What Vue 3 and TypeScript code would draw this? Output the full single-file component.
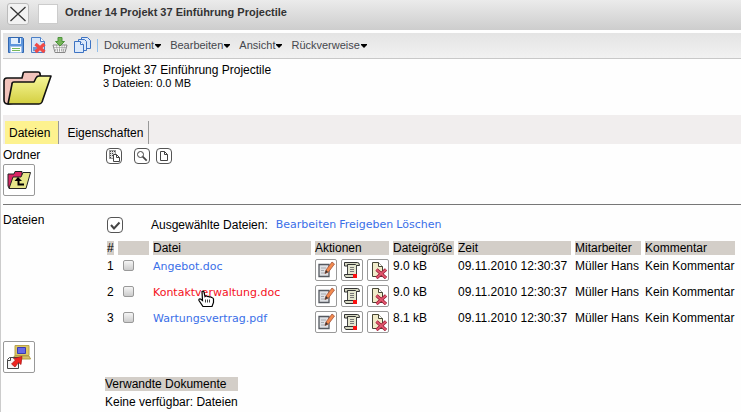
<script setup lang="ts">
import { ref } from 'vue'

interface FileRow {
  id: number
  name: string
  size: string
  time: string
  user: string
  comment: string
  checked: boolean
  active?: boolean
}

const menus: string[] = ['Dokument', 'Bearbeiten', 'Ansicht', 'Rückverweise']
const files = ref<FileRow[]>([
  { id: 1, name: 'Angebot.doc', size: '9.0 kB', time: '09.11.2010 12:30:37', user: 'Müller Hans', comment: 'Kein Kommentar', checked: false },
  { id: 2, name: 'Kontaktverwaltung.doc', size: '9.0 kB', time: '09.11.2010 12:30:37', user: 'Müller Hans', comment: 'Kein Kommentar', checked: false, active: true },
  { id: 3, name: 'Wartungsvertrag.pdf', size: '8.1 kB', time: '09.11.2010 12:30:37', user: 'Müller Hans', comment: 'Kein Kommentar', checked: false },
])

function toggleAll(): void {
  const next = !files.value.every((f) => f.checked)
  files.value.forEach((f) => (f.checked = next))
}
</script>

<template>
  <div class="window">
    <header class="titlebar">
      <button class="close" aria-label="Schließen">
        <svg width="20" height="20" viewBox="0 0 20 20"><path d="M2.500 3L17.500 17M17.500 3L2.500 17" stroke="#333" stroke-width="1.300" /></svg>
      </button>
      <button class="blank" aria-label="Fenster"></button>
      <h1>Ordner 14 Projekt 37 Einführung Projectile</h1>
    </header>

    <main class="content">
      <nav class="toolbar">
        <button class="tool" aria-label="Speichern">
          <svg width="16" height="16" viewBox="0 0 16 16">
            <path d="M.5 .5h14l1 1v14H.5z" fill="#5f96dc" stroke="#3267b0" />
            <path d="M3 1h10v6H3z" fill="#e3effc" /><path d="M10 1h2v5h-2z" fill="#3f74bd" />
            <path d="M2.500 9.500h11v6h-11z" fill="#fff" stroke="#a4c2e8" />
            <path d="M4 11.500h8M4 13.500h8" stroke="#78b85c" />
          </svg>
        </button>
        <button class="tool" aria-label="Löschen">
          <svg width="16" height="16" viewBox="0 0 16 16">
            <path d="M1.500 .5h9l4 4v11h-13z" fill="#d5e5f8" stroke="#4c7fc6" />
            <path d="M10.500 .5v4h4" fill="#fff" stroke="#4c7fc6" /><path d="M3 12h5" stroke="#6a99d8" stroke-width="4" />
            <path d="M5.500 7l9 8M14.500 7l-9 8" stroke="#f04a47" stroke-width="3.400" />
          </svg>
        </button>
        <button class="tool" aria-label="Ablegen">
          <svg width="16" height="16" viewBox="0 0 16 16">
            <path d="M1 8h14l-2 7.500H3z" fill="#f6f6f6" stroke="#888" />
            <path d="M2.500 10.500h11M3 13h10M4.500 8.500l1 6.500M7.500 8.500V15M10 8.500V15M12.500 8.500L11.500 15" stroke="#888" stroke-dasharray="1 1" />
            <path d="M6 .5h4v4h2.500L8 9 3.500 4.500H6z" fill="#76b458" stroke="#4d953c" />
          </svg>
        </button>
        <button class="tool" aria-label="Kopieren">
          <svg width="17" height="16" viewBox="0 0 17 16" fill="#dce9fa" stroke="#3d73c3">
            <path d="M7.500 .5h6l3 3v8h-9z" /><path d="M4.500 2.500h6l2 2v9h-8z" /><path d="M.5 4.500h6l3 3v8h-9z" /><path d="M6.500 4.500v3h3" fill="#fff" />
          </svg>
        </button>
        <span class="divider"></span>
        <button v-for="m in menus" :key="m" class="menu">{{ m }}<svg width="6" height="4" viewBox="0 0 6 4"><path d="M0 0h6v1L3 4 0 1z" fill="#000" /></svg></button>
      </nav>

      <section class="summary">
        <svg class="folder" width="49" height="36" viewBox="0 0 49 36" stroke="#111" stroke-width="1.600" stroke-linejoin="round">
          <defs><linearGradient id="gold" x1="0" y1="0" x2="0" y2="1"><stop offset="0" stop-color="#f7f79a" /><stop offset="1" stop-color="#d3cf40" /></linearGradient></defs>
          <path d="M5 34Q1 34 1 30V11Q1 8 4 8h15l1-4q0-2 2-2h13q2 0 2 2l1 4v5L32 30Z" fill="#f2c3bb" />
          <path d="M5 34l4-20q0-2 2-2h20l2-4q1-2 3-2h12l-9 26q-1 2-3 2Z" fill="url(#gold)" />
        </svg>
        <div>
          <h2>Projekt 37 Einführung Projectile</h2>
          <p>3 Dateien: 0.0 MB</p>
        </div>
      </section>

      <nav class="tabs">
        <a href="#dateien" class="tab current">Dateien</a>
        <a href="#eigenschaften" class="tab">Eigenschaften</a>
      </nav>

      <section class="row folders">
        <div class="side">
          <h3>Ordner</h3>
          <button class="big" aria-label="Übergeordneter Ordner">
            <svg width="24" height="20" viewBox="0 0 24 20" stroke="#222" stroke-linejoin="round">
              <path d="M1 4h6l1-2.500h7V5h5L16 18H2L1 16z" fill="#d82664" />
              <path d="M2 18.500L6 7h8l2-4.500h7.500L19 18.500z" fill="#e7e58a" />
              <path d="M11 7l4 4h-2.500v2.500H17v2h-6.500V11H7.500z" fill="#000" stroke="none" />
            </svg>
          </button>
        </div>
        <div class="minis">
          <button class="mini" aria-label="Einfügen">
            <svg width="16" height="16" viewBox="0 0 16 16" fill="none" stroke="#444">
              <path d="M3.500 2.500h6v8h-6z" fill="#ddd" stroke-dasharray="1 1" /><path d="M4 3.500h5M4 5.500h4M4 7.500h3M4.500 3v7M6.500 3v4" stroke-dasharray="1 1" />
              <path d="M7.500 6.500h3l3 3v4h-6z" fill="#fff" /><path d="M10.500 6.500v3h3" />
            </svg>
          </button>
          <button class="mini spaced" aria-label="Suchen">
            <svg width="16" height="16" viewBox="0 0 16 16" fill="none" stroke="#444"><circle cx="6.500" cy="6.500" r="3" /><path d="M8.700 8.700l4 4" stroke-width="1.800" /></svg>
          </button>
          <button class="mini" aria-label="Neu">
            <svg width="16" height="16" viewBox="0 0 16 16" fill="none" stroke="#444"><path d="M4.500 3.500h4l3 3v6h-7z" /><path d="M8.500 3.500v3h3" /></svg>
          </button>
        </div>
      </section>

      <section class="row files">
        <div class="side">
          <h3>Dateien</h3>
          <button class="big upload" aria-label="Hochladen">
            <svg width="24" height="24" viewBox="0 0 24 24">
              <path d="M8 .5h14v10H8z" fill="#dec863" stroke="#b8a24c" /><path d="M10.500 2.500h8v6h-8z" fill="#6668e6" stroke="#3a3ab0" />
              <path d="M7 11h15l1.500 3H8z" fill="#d8c264" stroke="#b09b45" />
              <path d="M2.500 12.500h9v11H.5v-9z" fill="#f4f4f4" stroke="#444" /><path d="M.5 15.500h3v-3" fill="#fff" stroke="#444" />
              <path d="M15 11.500l-1 8-2.500-2L8 22l-3.500-3 4-4-2-1.500z" fill="#ed2420" stroke="#a51213" stroke-width=".7" />
            </svg>
          </button>
        </div>
        <div class="listing">
          <div class="selection">
            <button class="mini" aria-label="Alle auswählen" @click="toggleAll">
              <svg width="16" height="16" viewBox="0 0 16 16"><path d="M4 8l3 3.500L12.500 5.500" fill="none" stroke="#444" stroke-width="2" /></svg>
            </button>
            <span class="caption">Ausgewählte Dateien:</span>
            <a href="#bearbeiten">Bearbeiten</a><a href="#freigeben">Freigeben</a><a href="#loeschen">Löschen</a>
          </div>
          <table>
            <colgroup>
              <col class="c-num" /><col class="c-check" /><col class="c-name" /><col class="c-act" /><col class="c-size" /><col class="c-time" /><col class="c-user" /><col class="c-note" />
            </colgroup>
            <thead>
              <tr><th>#</th><th></th><th>Datei</th><th>Aktionen</th><th>Dateigröße</th><th>Zeit</th><th>Mitarbeiter</th><th>Kommentar</th></tr>
            </thead>
            <tbody>
              <tr v-for="f in files" :key="f.id">
                <td>{{ f.id }}</td>
                <td><input v-model="f.checked" type="checkbox" :aria-label="f.name" /></td>
                <td class="name">
                  <a href="#datei" :class="{ active: f.active }">{{ f.name }}</a>
                  <svg v-if="f.active" class="pointer" width="17" height="17" viewBox="0 0 17 17">
                    <path d="M4 1.500q1.500-1 2 .5l1 4.500q1-1 2.500 0 1-.5 2 .5 1.500-.5 2 .5 1.500 0 2 1.500v3.500l-1.500 4h-9L1 10.500q-.5-2 1.500-1.500l2 1.500z" fill="#fff" stroke="#000" stroke-width="1.200" />
                    <path d="M7.500 9.500v3M9.500 9.500v3M11.500 9.500v3" stroke="#444" />
                  </svg>
                </td>
                <td>
                  <div class="actions">
                    <button class="action" aria-label="Bearbeiten">
                      <svg width="18" height="18" viewBox="0 0 18 18">
                        <path d="M2 3.500h10v12H2z" fill="#dfe1e5" stroke="#555960" stroke-width="1.300" /><path d="M4 7h5M4 9.500h3M4 12h4" stroke="#a5a8ae" />
                        <path d="M8 12.500l1-3.500 6-8 2.500 2L11.500 11z" fill="#f28a4e" stroke="#a1503a" stroke-width=".8" /><path d="M8 12.500l3-1.500-2-2z" fill="#333" />
                      </svg>
                    </button>
                    <button class="action" aria-label="Freigeben">
                      <svg width="18" height="18" viewBox="0 0 18 18">
                        <path d="M4.500 2.500h9v12h-9z" fill="#e4e6cf" stroke="#444" /><path d="M1.500 1.500h13q2 0 2 3h-3l-1-1h-8v1.500h-3z" fill="#d5d7c1" stroke="#333" />
                        <path d="M1.500 13.500h11l1 3H3q-2-1-1.500-3z" fill="#d5d7c1" stroke="#333" /><path d="M7 6.500h4M7 8.500h4M7 10.500h4" stroke="#777" />
                        <path d="M10 13h4v4h-4z" fill="#fa1010" />
                      </svg>
                    </button>
                    <button class="action" aria-label="Löschen">
                      <svg width="18" height="18" viewBox="0 0 18 18">
                        <path d="M3.500 1.500h6l4 4v10h-10z" fill="#f1ebc9" stroke="#464635" /><path d="M9.500 1.500v4h4" fill="#fff" stroke="#464635" />
                        <path d="M7.500 8.500l9.500 8.500M17 8.500l-9.500 8.500" stroke="#8f1830" stroke-width="3.200" /><path d="M7.500 8.500l9.500 8.500M17 8.500l-9.500 8.500" stroke="#e0556c" stroke-width="1.800" />
                      </svg>
                    </button>
                  </div>
                </td>
                <td>{{ f.size }}</td>
                <td>{{ f.time }}</td>
                <td>{{ f.user }}</td>
                <td>{{ f.comment }}</td>
              </tr>
            </tbody>
          </table>
          <div class="related">
            <h4>Verwandte Dokumente</h4>
            <p>Keine verfügbar: Dateien</p>
          </div>
        </div>
      </section>
    </main>
  </div>
</template>

<style>
body { margin: 0; background: #fefefe; }
</style>

<style scoped>
.window { display: flex; flex-direction: column; min-height: 100vh; font: 12px/14px "Liberation Sans", Arial, sans-serif; color: #000; overflow: hidden; }
h1, h2, h3, h4, p { margin: 0; font-size: 12px; font-weight: 400; }
button { margin: 0; padding: 0; font: inherit; color: inherit; background: none; border: 0; display: flex; align-items: center; justify-content: center; flex: none; box-sizing: border-box; }
svg { display: block; flex: none; }
a { text-decoration: none; }

.titlebar { display: flex; align-items: flex-start; height: 30px; padding: 3px 7px 0; box-sizing: border-box; background: linear-gradient(#ebebeb, #cdcdcd); }
.close { width: 22px; height: 22px; border: 1px solid #bbb; border-radius: 3px; background: #f2f2f2; }
.blank { width: 20px; height: 20px; margin: 1px 7px 0 9px; border: 1px solid #ccc; background: #fff; }
h1 { font-size: 11px; font-weight: 700; line-height: 18px; color: #333; }

.content { flex: 1; padding: 3px 0 0 2px; border-left: 1px solid #ccc; }
.toolbar { display: flex; align-items: center; gap: 6px; height: 24px; padding: 0 0 1px 5px; background: linear-gradient(#e4e4e4, #f1f1f1); border-bottom: 1px solid #c8c8c8; }
.tool { width: 16px; height: 16px; }
.divider { width: 1px; height: 13px; margin-left: 1px; background: #94bfe9; }
.menu { font-size: 11px; color: #45474d; gap: 1px; margin-right: 3px; }
.menu svg { margin-top: 2px; }

.summary { display: flex; padding: 4px 0 9px; height: 43px; }
.folder { margin: 7px 51px 0 0; }
.summary p { font-size: 11px; line-height: 12px; }

.tabs { display: flex; gap: 3px; padding: 6px 2px 0; background: #f1eeee; }
.row { display: flex; }
.side { width: 102px; flex: none; }
.folders { padding: 4px 0 8px; border-bottom: 1px solid #777; }
.big { width: 32px; height: 32px; margin-top: 2px; border: 1px solid #999; border-radius: 2px; background: #fff; }
.minis { display: flex; align-items: flex-start; padding-left: 1px; gap: 6px; }
.mini { width: 16px; height: 16px; border: 1px solid #555; border-radius: 4px; background: #fff; }
.spaced { margin-left: 6px; }

.files { padding-top: 8px; }
.big.upload { margin-top: 114px; }
.listing { flex: 1; min-width: 0; }
.selection { display: flex; align-items: center; height: 16px; padding: 4px 0 4px 2px; }
.caption { margin: 0 8px 0 28px; }
a { color: #3a6fe8; font-family: "DejaVu Sans", Verdana, sans-serif; font-size: 11px; }
.selection a { margin-right: 3px; }
.tab { padding: 5px 5px 4px; font: 12px/14px "Liberation Sans", Arial, sans-serif; color: #000; border-right: 1px solid #999; }
.tab.current { padding: 5px 8px 4px 4px; background: #fdf28f; }

table { width: 100%; margin-left: -2px; table-layout: fixed; border-spacing: 4px; }
th, td { padding: 0; font-weight: 400; text-align: left; vertical-align: top; white-space: nowrap; line-height: 14px; }
th { background: #d3cec8; height: 14px; }
.c-num { width: 7px; }
.c-check { width: 31px; }
.c-name { width: 158px; }
.c-act { width: 74px; }
.c-size { width: 61px; }
.c-time { width: 113px; }
.c-user { width: 66px; }
input { display: block; appearance: none; width: 11px; height: 11px; margin: 1px 0 0 5px; border: 1px solid #999; border-radius: 2px; background: linear-gradient(#f5f5f5, #ccc); }
input:checked { background: #666; }
.name { position: relative; }
.name a.active { color: #f5101c; }
.pointer { position: absolute; left: 45px; top: 5px; }
.actions { display: flex; gap: 4px; }
.action { width: 22px; height: 22px; border: 1px solid #999; border-radius: 2px; background: #fff; }

.related { display: table; margin-top: 40px; }
.related h4 { padding-right: 3px; background: #d3cec8; }
.related p { margin-top: 4px; }
</style>
